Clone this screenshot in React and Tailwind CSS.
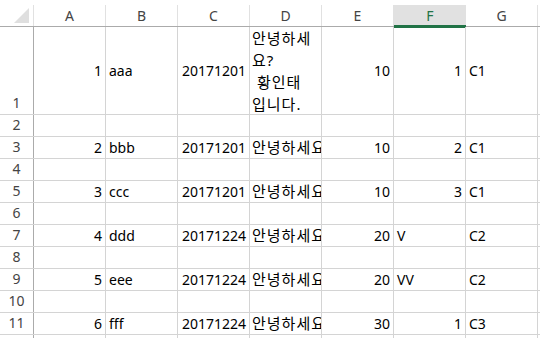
import React from "react";

const cols = ["A", "B", "C", "D", "E", "F", "G", ""];

// 셀 값: [텍스트, 정렬] — r: 오른쪽(숫자), l: 왼쪽(문자), k: 한글
const rows = [
  { n: 1, h: "h-[88px]", cells: [["1", "r"], ["aaa", "l"], ["20171201", "r"], ["WRAP", "l"], ["10", "r"], ["1", "r"], ["C1", "l"]] },
  { n: 2 },
  { n: 3, cells: [["2", "r"], ["bbb", "l"], ["20171201", "r"], ["안녕하세요", "k"], ["10", "r"], ["2", "r"], ["C1", "l"]] },
  { n: 4 },
  { n: 5, cells: [["3", "r"], ["ccc", "l"], ["20171201", "r"], ["안녕하세요", "k"], ["10", "r"], ["3", "r"], ["C1", "l"]] },
  { n: 6 },
  { n: 7, cells: [["4", "r"], ["ddd", "l"], ["20171224", "r"], ["안녕하세요", "k"], ["20", "r"], ["V", "l"], ["C2", "l"]] },
  { n: 8 },
  { n: 9, cells: [["5", "r"], ["eee", "l"], ["20171224", "r"], ["안녕하세요", "k"], ["20", "r"], ["VV", "l"], ["C2", "l"]] },
  { n: 10 },
  { n: 11, cells: [["6", "r"], ["fff", "l"], ["20171224", "r"], ["안녕하세요", "k"], ["30", "r"], ["1", "r"], ["C3", "l"]] },
  { n: 12 },
];

function Cell({ value }) {
  if (!value) {
    return <div className="w-[72px] shrink-0 h-full border-r border-[#d4d4d4]" />;
  }
  const [text, align] = value;
  if (text === "WRAP") {
    return (
      <div className="w-[72px] shrink-0 h-full border-r border-[#d4d4d4] pl-[2px] flex flex-col justify-center overflow-hidden whitespace-pre text-[15px] tracking-[1px] leading-[22px]">
        <div>안녕하세</div>
        <div>요?</div>
        <div> 황인태</div>
        <div>입니다.</div>
      </div>
    );
  }
  return (
    <div
      className={
        "w-[72px] shrink-0 h-full border-r border-[#d4d4d4] flex items-center overflow-hidden whitespace-nowrap " +
        (align === "r" ? "justify-end pr-[3px]" : align === "k" ? "pl-[2px] text-[15px] tracking-[1px]" : "pl-[3px]")
      }
    >
      {text}
    </div>
  );
}

export default function App() {
  return (
    <div
      className="w-[540px] h-[338px] overflow-hidden bg-white pt-[5px] text-[14px] text-black"
      style={{ fontFamily: "'Noto Sans', 'Noto Sans CJK KR', sans-serif" }}
    >
      {/* 열 머리글 */}
      <div className="flex h-[22px] border-b border-[#ababab]">
        <div className="w-[34px] shrink-0 h-full border-r border-[#e1e1e1] relative">
          <div className="absolute left-[14px] top-[3px] w-0 h-0 border-l-[15px] border-l-transparent border-b-[15px] border-b-[#dfdfdf]" />
        </div>
        {cols.map((c, i) =>
          c === "F" ? (
            <div key={i} className="w-[72px] shrink-0 h-[23px] bg-[#e1e1e1] border-b-[3px] border-[#217346] flex items-center justify-center text-[#217346]">
              {c}
            </div>
          ) : (
            <div key={i} className="w-[72px] shrink-0 h-full border-r border-[#e1e1e1] flex items-center justify-center text-[#444]">
              {c}
            </div>
          )
        )}
      </div>

      {rows.map((row) => (
        <div key={row.n} className={"flex border-b border-[#d4d4d4] " + (row.h || "h-[22px]")}>
          <div className="w-[34px] shrink-0 h-full border-r border-[#ababab] flex items-end justify-center pb-[1px] text-[#444]">
            {row.n}
          </div>
          {cols.map((c, i) => (
            <Cell key={i} value={row.cells ? row.cells[i] : null} />
          ))}
        </div>
      ))}
    </div>
  );
}
